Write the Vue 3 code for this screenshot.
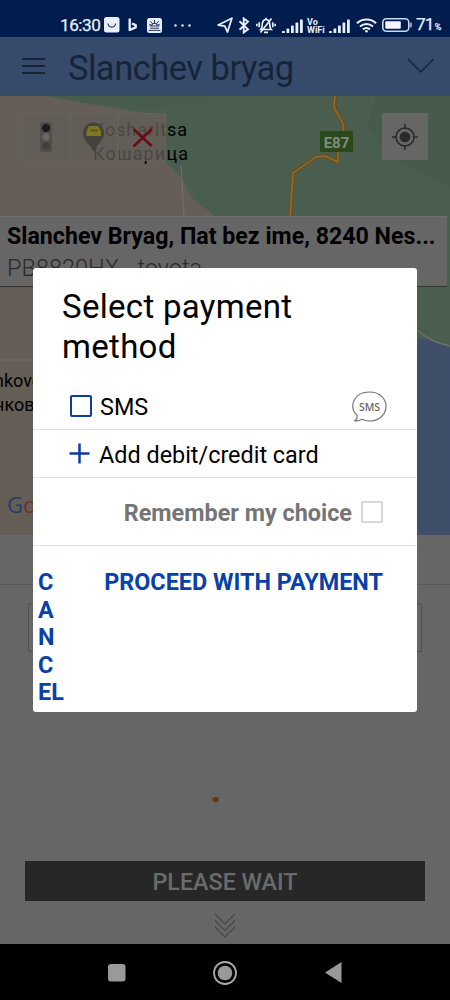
<script setup>
const signalBars = [
  { x: 0, h: 2 },
  { x: 4.5, h: 4.5 },
  { x: 9, h: 7.5 },
  { x: 13.5, h: 10.5 },
  { x: 18, h: 13.5 },
]
const cancelLines = ['C', 'A', 'N', 'C', 'EL']
</script>

<template>
  <div class="phone">
    <header class="status">
      <span class="clock">16:30</span>
      <svg class="st-app" width="16" height="16" viewBox="0 0 16 16">
        <rect width="15.5" height="15.5" rx="2.5" fill="#e9eefb" />
        <path d="M4 6.5c.6 4.8 7 4.8 7.6 0" fill="none" stroke="#1c2c50" stroke-width="1.1" />
      </svg>
      <svg class="st-b" width="10" height="14" viewBox="0 0 10 14">
        <path d="M1.700 .5v11.500l6-2.700V7.200L4 5.500" fill="none" stroke="#e9eefb" stroke-width="2.400" stroke-linejoin="round" />
      </svg>
      <svg class="st-cal" width="15" height="15" viewBox="0 0 15 15">
        <rect width="15" height="15" rx="2.5" fill="#e9eefb" />
        <path d="M2.5 8h10M1.5 12.4h12M7.5 2v3M3.3 3.2l2 2.3M11.7 3.2l-2 2.3M2.3 6.3l2 .7M12.7 6.3l-2 .7" stroke="#26375c" stroke-width="1" />
        <path d="M4.7 8a2.8 2.8 0 0 1 5.6 0M3 10.2h9" fill="none" stroke="#26375c" stroke-width="1.1" />
      </svg>
      <svg class="st-dots" width="17" height="3" viewBox="0 0 17 3" fill="#dfe6f7">
        <circle cx="1.5" cy="1.5" r="1.2" /><circle cx="8.5" cy="1.5" r="1.2" /><circle cx="15.5" cy="1.5" r="1.2" />
      </svg>
      <svg class="st-loc" width="16" height="16" viewBox="0 0 16 16">
        <path d="M1.2 8L14.9 1.2 10.5 15 7.8 9.2z" fill="none" stroke="#e9eefb" stroke-width="1.8" stroke-linejoin="round" />
      </svg>
      <svg class="st-bt" width="12" height="17" viewBox="0 0 12 17">
        <path d="M1.5 4.3l8.5 8-4.3 3.2V1.500l4.300 3.200-8.500 8" fill="none" stroke="#e9eefb" stroke-width="1.900" />
      </svg>
      <svg class="st-bell" width="20" height="17" viewBox="0 0 20 17" fill="none" stroke="#e9eefb" stroke-width="1.700">
        <path d="M5 12.500c1.500-1.300 1-4.500 1.400-6.500C7 3.500 8.400 2.500 10 2.500s3 1 3.600 3.500c.4 2-.1 5.200 1.400 6.500zM10 2.500V.8M8 15.300h4M15.500 1.500L4.500 15.500M3.200 5.300v5M16.800 5.300v5M.8 6.800v2.500M19.200 6.800v2.500" />
      </svg>
      <svg class="st-sig" width="21" height="14" viewBox="0 0 21 14" fill="#e9eefb">
        <rect v-for="b in signalBars" :key="b.x" :x="b.x" :y="14 - b.h" width="2.8" :height="b.h" rx=".6" />
      </svg>
      <span class="vowifi"><span>Vo</span><span>WiFi</span></span>
      <svg class="st-sig2" width="21" height="14" viewBox="0 0 21 14" fill="#e9eefb">
        <rect v-for="b in signalBars" :key="b.x" :x="b.x" :y="14 - b.h" width="2.8" :height="b.h" rx=".6" />
      </svg>
      <svg class="st-wifi" width="21" height="15" viewBox="0 0 21 15" fill="none" stroke="#e9eefb" stroke-width="2.1">
        <path d="M.9 5.200c5.500-5 13.700-5 19.200 0M4 8.500c3.800-3.400 9.200-3.400 13 0M7 11.400c2-1.800 5-1.800 7 0" />
        <circle cx="10.5" cy="13.3" r="1.3" fill="#e9eefb" stroke="none" />
      </svg>
      <svg class="st-bat" width="30" height="14" viewBox="0 0 30 14">
        <rect x=".8" y=".8" width="26" height="12.4" rx="3.5" fill="none" stroke="#ccd6ec" stroke-width="1.6" />
        <rect x="3.3" y="3.2" width="15.5" height="7.6" rx="1" fill="#f2f5fc" />
        <path d="M29 4.800v4.400" stroke="#ccd6ec" stroke-width="1.4" />
      </svg>
      <span class="pct">71<small>%</small></span>
    </header>

    <div class="titlebar">
      <svg class="burger" width="24" height="18" viewBox="0 0 24 18">
        <path d="M0 2h23M0 9h23M0 16h23" stroke="#172438" stroke-width="2" />
      </svg>
      <h1>Slanchev bryag</h1>
      <svg class="chev" width="28" height="16" viewBox="0 0 28 16">
        <path d="M1 1l12.800 13L26.500 1" fill="none" stroke="#172438" stroke-width="1.3" />
      </svg>
    </div>

    <main class="map">
      <svg class="terrain" width="450" height="440" viewBox="0 0 450 440">
        <rect width="450" height="440" fill="#655e56" />
        <path d="M44 0C65 6 100 10 130 16l36 4v47c8 10 19 15 21 27 3 10 14 16 29 28h114v140h97l23 4V0z" fill="#4a5e50" />
        <path d="M44 0C80 8 110 12 140 14l60-6 12-8z" fill="#475c4b" />
        <path d="M376 0l-8 32 30 35 52 25V0z" fill="#465b4c" />
        <path d="M181 70l3 52" stroke="#74706a" stroke-width="1" fill="none" />
        <path d="M330 242c45-1 90-4 120 9v189H330z" fill="#3f4f69" />
        <path d="M417 235c10 8 16 12 33 16" stroke="#6b7065" stroke-width="1.6" fill="none" />
        <path d="M0 265h34" stroke="#706b60" stroke-width="1" />
        <g fill="none" stroke-linejoin="round">
          <path d="M335 0l-1 12 9 17v28M338 57v10l-13-6-9 1-23 16-3 46" stroke="#69501f" stroke-width="4.5" />
          <path d="M335 0l-1 12 9 17v28M338 57v10l-13-6-9 1-23 16-3 46" stroke="#8a6e35" stroke-width="1.5" />
        </g>
        <rect x="320" y="36" width="33" height="21" fill="#2b4a1a" />
        <text x="336.5" y="52.5" text-anchor="middle" class="road">E87</text>
        <g class="place">
          <text x="93" y="41" textLength="94">Kosharitsa</text>
          <text x="93" y="65" textLength="95">Кошарица</text>
          <text x="-6" y="292">nkovo</text>
          <text x="-6" y="316">нково</text>
        </g>
        <text x="7" y="418" class="google"><tspan fill="#263c68">G</tspan><tspan fill="#70302c">o</tspan></text>
      </svg>
      <div class="tools">
        <div class="layers">
          <div class="tool">
            <svg width="46" height="46" viewBox="0 0 46 46">
              <rect x="17" y="8" width="12" height="30" rx="3" fill="#504e4b" />
              <circle cx="23" cy="14" r="4" fill="#1b1b1b" />
              <circle cx="23" cy="23" r="3.8" fill="#686661" />
              <circle cx="23" cy="32" r="3.8" fill="#403f3c" />
            </svg>
          </div>
          <div class="tool">
            <svg width="46" height="46" viewBox="0 0 46 46">
              <path d="M22.500 38c-3-8-10.500-11-10.500-19a10.500 10.500 0 0 1 21 0c0 8-7.500 11-10.500 19z" fill="#43423e" />
              <path d="M15.500 22v-5l2.500-5h9l3 5v5z" fill="#817719" /><path d="M19 16.500h8" stroke="#515035" stroke-width="1.6" />
            </svg>
          </div>
          <div class="tool">
            <svg width="46" height="46" viewBox="0 0 46 46">
              <path d="M14.500 15l18 17M33 15L14.500 32.500" stroke="#6b0a15" stroke-width="2.5" />
            </svg>
          </div>
        </div>
        <div class="locate">
          <svg width="26" height="26" viewBox="0 0 26 26" fill="none" stroke="#2a2a2a" stroke-width="1.5">
            <circle cx="13" cy="13" r="9" /><circle cx="13" cy="13" r="4.6" fill="#2a2a2a" />
            <path d="M13 0v5M13 21v5M0 13h5M21 13h5" />
          </svg>
        </div>
      </div>
      <div class="info">
        <p class="address">Slanchev Bryag, Пat bez ime, 8240 Nes...</p>
        <p class="plate">PB8820HX - toyota</p>
      </div>
    </main>

    <section class="sheet">
      <div class="sheet-top"></div>
      <div class="field"></div>
      <svg class="spark" width="9" height="9" viewBox="0 0 9 9"><path d="M1 3.500l2-1L5 1.500l.8 1.200L8 2.500 7.200 5l.3 2L5 6.800 4 8 3.200 6.200 1 5.500l1-1z" fill="#663411" /></svg>
      <div class="wait">PLEASE WAIT</div>
      <svg class="more" width="22" height="25" viewBox="0 0 22 25"><path d="M1 1l10 10L21 1M1 7.500l10 10 10-10M1 14l10 10 10-10" fill="none" stroke="#454545" stroke-width="1.1" /></svg>
    </section>

    <nav class="nav">
      <svg width="18" height="18" viewBox="0 0 18 18"><rect width="17.5" height="17.5" rx="3" fill="#999" /></svg>
      <svg class="home" width="24" height="24" viewBox="0 0 24 24"><circle cx="12" cy="12" r="11" fill="none" stroke="#aaa" stroke-width="1.8" /><circle cx="12" cy="12" r="7.3" fill="#999" /></svg>
      <svg width="17" height="21" viewBox="0 0 17 21"><path d="M0 10.500L16.500 0v21z" fill="#999" /></svg>
    </nav>

    <div class="dialog" role="dialog">
      <h2>Select payment<br />method</h2>
      <div class="row sms">
        <i class="box"></i>
        <span class="t-sms">SMS</span>
        <svg class="bubble" width="35" height="31" viewBox="0 0 35 31">
          <path d="M5 24.200C-3.500 16 1.500 1 17.500 1 28 1 34 8 34 15.500 34 24 26.500 30 17 30c-3.500 0-5-.7-7-1.700-2.600 1.500-5 2-7.600 1.400 2-.9 3.200-2.800 2.600-5.500z" fill="none" stroke="#757575" stroke-width="1.2" stroke-linejoin="round" />
          <text x="7" y="19.5" textLength="21">SMS</text>
        </svg>
      </div>
      <div class="row add">
        <svg width="21" height="21" viewBox="0 0 21 21"><path d="M10.500 .5v20M.5 10.500h20" stroke="#0a3ea6" stroke-width="2.5" /></svg>
        <span class="t-add">Add debit/credit card</span>
      </div>
      <div class="row remember">
        <span class="t-rem">Remember my choice</span>
        <i class="box grey"></i>
      </div>
      <div class="actions">
        <button class="cancel"><span v-for="(l, i) in cancelLines" :key="i">{{ l }}</span></button>
        <button class="proceed">PROCEED WITH PAYMENT</button>
      </div>
    </div>
  </div>
</template>

<style>
body { margin: 0; background: #666; }
</style>

<style scoped>
* { box-sizing: border-box; }
svg { display: block; flex: none; }
h1, h2, p { margin: 0; font-weight: 400; white-space: nowrap; }
.phone { position: relative; width: 450px; height: 1000px; overflow: hidden; display: flex; flex-direction: column; font-family: Roboto, "Liberation Sans", sans-serif; background: #666; color: #000; }
.status { height: 37px; flex: none; background: #001d4d; display: flex; align-items: center; padding: 13px 0 0 60px; color: #e9eefb; }
.clock { width: 44px; font-size: 17.2px; line-height: 20px; letter-spacing: -.5px; white-space: nowrap; -webkit-text-stroke: .25px #e9eefb; }
.st-b { margin-left: 8px; }
.st-cal { margin-left: 9px; }
.st-dots { margin-left: 12px; }
.st-loc { margin-left: 26px; }
.st-bt { margin-left: 5px; }
.st-bell { margin-left: 6px; }
.st-sig { margin-left: 6px; margin-top: 1px; }
.vowifi { width: 20px; margin-left: 4px; display: flex; flex-direction: column; font-size: 9px; line-height: 8px; font-weight: 700; padding-top: 1px; }
.st-sig2 { margin-left: 2px; margin-top: 1px; }
.st-wifi { margin-left: 6px; }
.st-bat { margin-left: 5px; }
.pct { margin-left: 4px; font-size: 17.2px; line-height: 20px; letter-spacing: -.8px; white-space: nowrap; -webkit-text-stroke: .25px #e9eefb; }
.pct small { font-size: 9px; margin-left: 1px; letter-spacing: 0; }
.titlebar { height: 59px; flex: none; background: #364a6c; display: flex; align-items: center; padding: 0 15px 0 22px; border-bottom: 1px solid #3a4d69; }
.titlebar h1 { margin: 4px 0 0 22px; font-size: 34.5px; line-height: 44px; letter-spacing: -.5px; color: #172438; flex: 1; }
.map { position: relative; height: 439px; flex: none; overflow: hidden; }
.terrain { position: absolute; left: 0; top: -1px; }
.place { font-size: 18px; }
.road { font-size: 15px; font-weight: 700; fill: #858b7f; }
.google { font-size: 22px; font-family: "Open Sans", sans-serif; }
.tools { position: relative; display: flex; justify-content: space-between; padding: 17px 22px 0 22px; }
.layers { display: flex; }
.tool { width: 48px; height: 48px; background: rgba(99, 94, 88, .75); border: 1px solid rgba(115, 112, 108, .25); }
.locate { width: 46px; height: 47px; background: #666; display: grid; place-items: center; }
.info { position: relative; width: 447px; height: 71px; margin-top: 55px; background: #666; border-bottom: 1px solid #333; border-top: 1px solid #6e6e6c; padding: 3px 0 0 7px; }
.address { font-size: 23.2px; line-height: 32px; font-weight: 700; }
.plate { font-size: 23.5px; line-height: 32px; font-weight: 300; color: #292929; }
.sheet { height: 409px; flex: none; background: #666; display: flex; flex-direction: column; align-items: center; border-top: 1px solid #6b6966; }
.sheet-top { width: 450px; height: 49px; border-bottom: 1px solid #585858; }
.field { width: 394px; height: 49px; margin-top: 18px; border: 1.5px solid #505050; border-radius: 2px; }
.spark { margin: 143px 19px 0 0; }
.wait { width: 400px; height: 40px; margin-top: 57px; background: #272727; color: #6b6b6b; font-size: 23.3px; line-height: 42px; font-weight: 500; text-align: center; white-space: nowrap; }
.more { margin-top: 12px; }
.nav { height: 57px; flex: none; background: #000; display: flex; align-items: center; padding: 0 108px; justify-content: space-between; }
.home { margin-right: 1px; }
.dialog { position: absolute; left: 33px; top: 268px; width: 384px; height: 444px; background: #fff; border-radius: 3px; display: flex; flex-direction: column; }
.dialog h2 { height: 115px; padding: 19px 0 0 29px; font-size: 33px; line-height: 40px; letter-spacing: .3px; }
.row { display: flex; align-items: center; border-bottom: 1px solid #e2e2e2; white-space: nowrap; font-size: 23.4px; line-height: 28px; }
.sms { height: 47px; padding: 0 30px 0 37px; }
.box { display: block; width: 22px; height: 22px; border: 2px solid #0a3ea6; border-radius: 2px; flex: none; }
.t-sms { margin-left: 8px; margin-top: 1px; flex: 1; }
.bubble text { font-size: 10.5px; font-family: "Noto Sans", sans-serif; fill: #666; font-weight: 500; }
.add { height: 48px; padding-left: 36px; }
.t-add { margin-left: 9px; margin-top: 3px; }
.remember { height: 68px; justify-content: flex-end; padding-right: 34px; }
.t-rem { font-weight: 700; color: #757575; margin-right: 9px; margin-top: 3px; }
.grey { border-color: #d8d8d8; border-radius: 1px; }
.actions { display: flex; justify-content: space-between; align-items: flex-start; padding: 23px 34px 0 5px; }
button { border: 0; padding: 0; background: none; font: 700 23.4px/27.5px Roboto, sans-serif; color: #0a41a8; white-space: nowrap; }
.cancel { display: flex; flex-direction: column; align-items: flex-start; }
</style>
